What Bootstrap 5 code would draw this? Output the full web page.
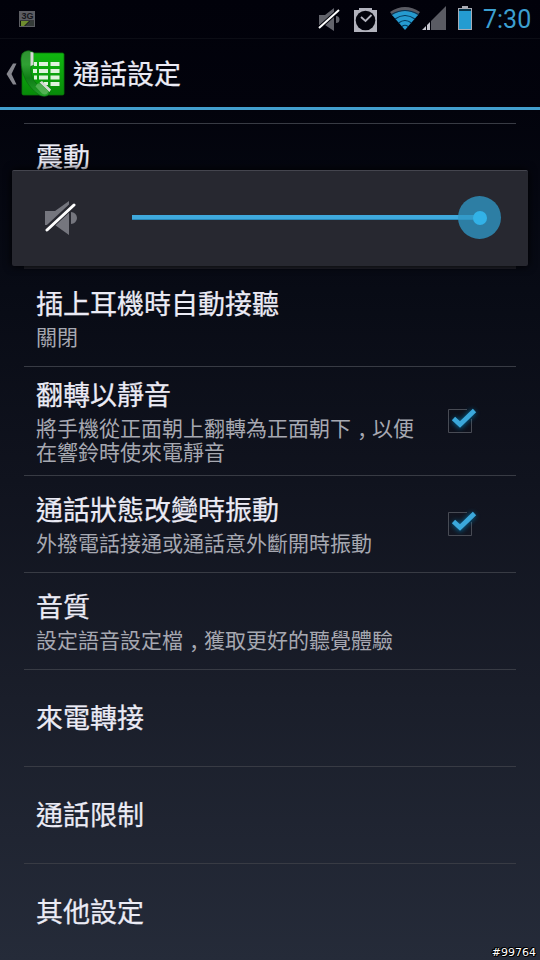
<!DOCTYPE html>
<html lang="zh-Hant">
<head>
<meta charset="utf-8">
<meta name="viewport" content="width=device-width, initial-scale=1">
<title>通話設定</title>
<link href="https://cdn.jsdelivr.net/npm/bootstrap@5.3.0/dist/css/bootstrap.min.css" rel="stylesheet">
<style>
body{font-family:Roboto,"Noto Sans CJK TC",sans-serif;background:#02030b;color:#ebebf5}
.screen{width:540px;height:960px;background:linear-gradient(#01010a 0,#02030c 110px,#080b15 290px,#10131e 480px,#1a1e2a 700px,#252b39 960px)}
.statusbar{height:39px;border-bottom:1px solid #0c0d15}
.clock{font-size:25px;line-height:38px;color:#3c9fd0;width:49px;padding-top:2px}
.actionbar{height:71px;border-bottom:3px solid #429fcd}
.page-title{font-size:27px;line-height:40px;font-weight:400;padding:3px 0 0 5px;-webkit-text-stroke:.25px #ebebf5}
.settings{margin:13px 24px 0}
.setting{height:97px;border-top:1px solid #383b44;padding:0 12px}
.setting.first{height:143px;padding-top:14px}
.setting.headset{height:100px;border-top:3px solid #20212a}
.setting.two-line{height:109px}
.setting.single{padding-top:2px}
.name{font-size:27px;line-height:40px;white-space:nowrap;-webkit-text-stroke:.25px #ebebf5}
.name:not(:last-child){margin:-1px 0 1px}
.summary{font-size:21px;line-height:24px;color:#a6a8b1;white-space:nowrap}
.comma{display:inline-block;width:21px;height:24px;line-height:22px;vertical-align:top;padding-left:6px;letter-spacing:-6px;font-family:"Noto Sans CJK SC",sans-serif}
.tick{width:36px;height:36px;margin-right:23px}
.volume{left:12px;top:170px;width:516px;height:96px;padding-bottom:2px;background:#272830;border-top:1px solid #44454e;border-radius:2px;box-shadow:0 0 8px #000}
.track{height:5px;background:#3fa9dc;border-bottom:1px solid #2987b6;width:348px}
.thumb{width:43px;height:43px;background:rgba(47,151,197,.78);margin-left:-22px}
.thumb-core{width:14px;height:14px;background:#32b2e7}
.stamp{right:4px;bottom:0;font:11px/14px "DejaVu Sans",sans-serif;color:#fff;text-shadow:1px 0 #000,-1px 0 #000,0 1px #000,0 -1px #000,1px 1px #000,-1px -1px #000}
</style>
<script src="https://cdn.jsdelivr.net/npm/bootstrap@5.3.0/dist/js/bootstrap.bundle.min.js"></script>
</head>
<body>
<svg width="0" height="0" class="position-absolute" aria-hidden="true">
  <defs>
    <linearGradient id="green" x1="0" y1="0" x2="0" y2="1"><stop offset="0" stop-color="#10b810"/><stop offset="1" stop-color="#078a09"/></linearGradient>
    <linearGradient id="handset" x1="0" y1="0" x2="0" y2="1"><stop offset="0" stop-color="#2f8f31"/><stop offset=".3" stop-color="#2fa033"/><stop offset=".6" stop-color="#0f7d16"/><stop offset="1" stop-color="#23a32a"/></linearGradient>
    <filter id="glow" x="-50%" y="-50%" width="200%" height="200%"><feGaussianBlur stdDeviation="2.6"/></filter>
    <symbol id="muted" viewBox="0 0 32 36">
      <path fill="#75767e" d="M0 11h10L24 1v34L10 25H0zM26 12a6 6 0 0 1 0 12z"/>
      <path stroke="#272830" stroke-width="6" d="M1 30 29 4"/>
      <path stroke="#fff" stroke-width="3" stroke-linecap="round" d="M2 30 29 5"/>
    </symbol>
    <symbol id="checked" viewBox="0 0 36 36">
      <path fill="none" stroke="#484b54" d="M22 6.500H3.500v23h23V16"/>
      <path fill="none" stroke="#087ab0" stroke-width="6" opacity=".75" filter="url(#glow)" d="m9 16 6 6L29 8"/>
      <path fill="none" stroke="#3ba8db" stroke-width="4.800" d="m8.500 15.500 6.500 6L29.500 7.500"/>
    </symbol>
  </defs>
</svg>
<main class="screen position-relative overflow-hidden">
  <div class="statusbar d-flex align-items-center">
    <svg class="ms-3 me-auto" width="20" height="20" viewBox="-3 0 20 20">
      <path fill="#5c5d63" d="M0 2h16v16H0z"/><path fill="#101512" d="M1 11.500h14V17H1z"/><path fill="#6f8d2f" d="M2 12h8l-5 5H2z"/><path fill="#343b38" d="M11 12h4v5H6z"/>
      <text x="2.500" y="9.500" font-family="Liberation Sans" font-weight="700" font-size="9" fill="#15161c">3G</text>
    </svg>
    <svg width="165" height="38" viewBox="310 0 165 38">
      <path fill="#62636b" d="M319 15h6l9-7v23l-9-6h-6zM336 16a3.500 3.500 0 0 1 0 7z"/>
      <path stroke="#02030b" stroke-width="4" d="m319 28 20-18"/><path stroke="#fff" stroke-width="2" d="m319 28 20-18"/>
      <path fill="#b2b3bd" d="M354 10h5V8h13v2h5v22h-23z"/><circle cx="365.500" cy="20.500" r="9.800" fill="#02030b"/><path fill="none" stroke="#b2b3bd" stroke-width="1.800" d="m361 17 4.500 4 6-6"/>
      <path fill="#5a5b63" d="M390 12q15-10 30 0l-3 4q-12-8-24 0z"/>
      <path fill="#259bd0" d="M392 15q13-8 26 0l-13 15z"/>
      <g fill="none" stroke="#03375a" stroke-width="1.200"><path d="M391.500 14.500q13.500-8 27 0M395 19q10-7 20 0M398.500 23q6.500-5 13 0M402 26.500q3-2.500 6 0"/></g>
      <path fill="#5a5b63" d="M431 21 446 6v24h-15z"/><path fill="#c5c6cf" d="m422 30 4-4v4zM427 25l3-3v8h-3z"/>
      <path fill="#a9abb4" d="M462 6h6v2h4v22h-14V8h4z"/><path fill="#07354b" d="M459 9h12v3h-12z"/><path fill="#249cd1" d="M459 11h12v18h-12z"/>
    </svg>
    <span class="clock ms-2 me-2">7:30</span>
  </div>
  <header class="actionbar d-flex align-items-center">
    <svg width="68" height="68" viewBox="0 39 68 68" class="flex-shrink-0">
      <path fill="#85868d" d="M13 63.500h3.500L11.500 74l5 10.500H13L6.500 74z"/>
      <rect x="22" y="53" width="42" height="42" rx="1.500" fill="url(#green)" stroke="#087409" stroke-width=".8"/>
      <g fill="#dff3dd"><path d="M34 62h3v4h-3zM39 62h9v4h-9zM50.500 62h9v4h-9zM33 69h4v4h-4zM39 69h9v4h-9zM50.500 69h9v4h-9zM34 75.500h3v4h-3zM39 75.500h9v4h-9zM50.500 75.500h9v4h-9zM44 82h4v3h-4zM50.500 82h9v4h-9z"/></g>
      <path fill="url(#handset)" stroke="#0a6c10" stroke-width=".7" d="M30 51c-6-1-9 3-9 9 0 15 7 27 17 34 4 3 9 3 11 0l1-3-9-8-3 2c-5-4-8-11-7-18l2-2V52z"/>
      <path fill="#d5dad4" d="m30.500 52 3 .5V65l-3 1zM39.500 82.500l2.500-1.500 9 8.500-1.500 2.500z"/><path fill="#63b963" opacity=".75" d="M35.500 86.500q2-4 4.500-3l8.500 8q-2 4.500-6.500 2z"/>
    </svg>
    <h1 class="page-title mb-0">通話設定</h1>
  </header>

  <section class="settings">
    <div class="setting first"><div class="name">震動</div></div>
    <div class="setting headset d-flex flex-column justify-content-center"><div class="name">插上耳機時自動接聽</div><div class="summary">關閉</div></div>
    <div class="setting two-line d-flex align-items-center justify-content-between">
      <div><div class="name">翻轉以靜音</div><div class="summary">將手機從正面朝上翻轉為正面朝下<span class="comma" lang="zh-Hans">，</span>以便<br>在響鈴時使來電靜音</div></div>
      <svg class="tick"><use href="#checked"/></svg>
    </div>
    <div class="setting d-flex align-items-center justify-content-between">
      <div><div class="name">通話狀態改變時振動</div><div class="summary">外撥電話接通或通話意外斷開時振動</div></div>
      <svg class="tick"><use href="#checked"/></svg>
    </div>
    <div class="setting d-flex flex-column justify-content-center"><div class="name">音質</div><div class="summary">設定語音設定檔<span class="comma" lang="zh-Hans">，</span>獲取更好的聽覺體驗</div></div>
    <div class="setting single d-flex align-items-center"><div class="name">來電轉接</div></div>
    <div class="setting single d-flex align-items-center"><div class="name">通話限制</div></div>
    <div class="setting single d-flex align-items-center"><div class="name">其他設定</div></div>
  </section>

  <div class="volume position-absolute d-flex align-items-center">
    <svg class="ms-4 me-5 flex-shrink-0" width="48" height="36" viewBox="-9 0 48 36"><use href="#muted" width="32" height="36"/></svg>
    <div class="track flex-shrink-0"></div>
    <div class="thumb rounded-circle d-flex align-items-center justify-content-center flex-shrink-0"><div class="thumb-core rounded-circle"></div></div>
  </div>
  <div class="stamp position-absolute">#99764</div>
</main>
</body>
</html>
